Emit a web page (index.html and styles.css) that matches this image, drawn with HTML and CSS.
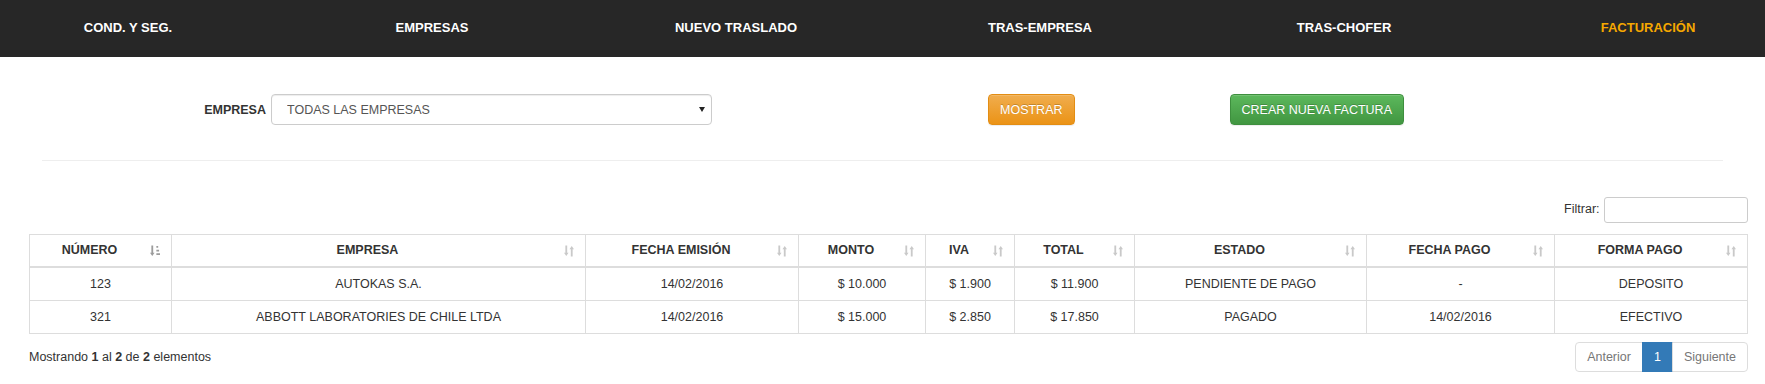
FILE: index.html
```html
<!DOCTYPE html>
<html lang="es">
<head>
<meta charset="UTF-8">
<title>Facturación</title>
<link rel="stylesheet" href="styles.css">
</head>
<body>
<div class="navbar">
  <ul class="nav">
    <li><a href="#">COND. Y SEG.</a></li>
    <li><a href="#">EMPRESAS</a></li>
    <li><a href="#">NUEVO TRASLADO</a></li>
    <li><a href="#">TRAS-EMPRESA</a></li>
    <li><a href="#">TRAS-CHOFER</a></li>
    <li class="active"><a href="#">FACTURACIÓN</a></li>
  </ul>
</div>

<div class="page">
  <form class="filtros">
    <label class="lbl-empresa" for="empresa">EMPRESA</label>
    <div class="select-wrap">
      <select id="empresa" class="form-control">
        <option>TODAS LAS EMPRESAS</option>
      </select>
      <span class="caret"></span>
    </div>
    <button type="button" class="btn btn-warning btn-mostrar">MOSTRAR</button>
    <button type="button" class="btn btn-success btn-crear">CREAR NUEVA FACTURA</button>
  </form>

  <hr>

  <div class="dt-filter">
    <label>Filtrar: <input type="search"></label>
  </div>

  <table class="dt">
    <colgroup>
      <col class="w-num"><col class="w-emp"><col class="w-fecha"><col class="w-monto"><col class="w-iva">
      <col class="w-total"><col class="w-estado"><col class="w-pago"><col class="w-forma">
    </colgroup>
    <thead>
      <tr>
        <th>NÚMERO<svg class="sort sort-asc" viewBox="0 0 11 12"><path d="M1.5 0h2v8H5l-2.5 3.5L0 8h1.5z M7 .5h2v2H7z M7 4.5h3v2H7z M7 8.5h4v2H7z"/></svg></th>
        <th>EMPRESA<svg class="sort" viewBox="0 0 11 12"><path d="M1.5 0h2v8H5l-2.5 3.5L0 8h1.5z M7.5 12h2V4H11L8.5.5 6 4h1.5z"/></svg></th>
        <th>FECHA EMISIÓN<svg class="sort" viewBox="0 0 11 12"><path d="M1.5 0h2v8H5l-2.5 3.5L0 8h1.5z M7.5 12h2V4H11L8.5.5 6 4h1.5z"/></svg></th>
        <th>MONTO<svg class="sort" viewBox="0 0 11 12"><path d="M1.5 0h2v8H5l-2.5 3.5L0 8h1.5z M7.5 12h2V4H11L8.5.5 6 4h1.5z"/></svg></th>
        <th>IVA<svg class="sort" viewBox="0 0 11 12"><path d="M1.5 0h2v8H5l-2.5 3.5L0 8h1.5z M7.5 12h2V4H11L8.5.5 6 4h1.5z"/></svg></th>
        <th>TOTAL<svg class="sort" viewBox="0 0 11 12"><path d="M1.5 0h2v8H5l-2.5 3.5L0 8h1.5z M7.5 12h2V4H11L8.5.5 6 4h1.5z"/></svg></th>
        <th>ESTADO<svg class="sort" viewBox="0 0 11 12"><path d="M1.5 0h2v8H5l-2.5 3.5L0 8h1.5z M7.5 12h2V4H11L8.5.5 6 4h1.5z"/></svg></th>
        <th>FECHA PAGO<svg class="sort" viewBox="0 0 11 12"><path d="M1.5 0h2v8H5l-2.5 3.5L0 8h1.5z M7.5 12h2V4H11L8.5.5 6 4h1.5z"/></svg></th>
        <th>FORMA PAGO<svg class="sort" viewBox="0 0 11 12"><path d="M1.5 0h2v8H5l-2.5 3.5L0 8h1.5z M7.5 12h2V4H11L8.5.5 6 4h1.5z"/></svg></th>
      </tr>
    </thead>
    <tbody>
      <tr>
        <td>123</td><td>AUTOKAS S.A.</td><td>14/02/2016</td><td>$ 10.000</td><td>$ 1.900</td>
        <td>$ 11.900</td><td>PENDIENTE DE PAGO</td><td>-</td><td>DEPOSITO</td>
      </tr>
      <tr>
        <td>321</td><td>ABBOTT LABORATORIES DE CHILE LTDA</td><td>14/02/2016</td><td>$ 15.000</td><td>$ 2.850</td>
        <td>$ 17.850</td><td>PAGADO</td><td>14/02/2016</td><td>EFECTIVO</td>
      </tr>
    </tbody>
  </table>

  <div class="dt-bottom">
    <div class="dt-info">Mostrando <b>1</b> al <b>2</b> de <b>2</b> elementos</div>
    <ul class="pagination">
      <li class="disabled"><a href="#">Anterior</a></li>
      <li class="active"><a href="#">1</a></li>
      <li class="disabled"><a href="#">Siguiente</a></li>
    </ul>
  </div>
</div>
</body>
</html>
```

FILE: styles.css
```css
*{box-sizing:border-box}
body{margin:0;background:#fff;font-family:"Liberation Sans",Arial,sans-serif;font-size:12.5px;line-height:18px;color:#333}

/* barra superior */
.navbar{background:#272727;height:57px}
.nav{display:grid;grid-template-columns:repeat(6,304px);margin:0 0 0 -24px;padding:0;list-style:none}
.nav li{text-align:center}
.nav a{display:inline-block;line-height:56px;font-size:13px;font-weight:bold;color:#fff;text-decoration:none}
.nav .active a{color:#f6a800}

.page{padding:0 17px 0 29px}

/* filtros */
.filtros{display:flex;align-items:center;margin:37px 0 0;padding-left:175px}
.lbl-empresa{flex:0 0 67px;padding-right:5px;text-align:right;font-weight:bold;white-space:nowrap}
.select-wrap{position:relative}
.form-control{display:block;width:441px;height:31px;padding:0 0 0 15px;border:1px solid #ccc;border-radius:4px;background:#fff;color:#555;font:inherit;box-shadow:inset 0 1px 1px rgba(0,0,0,.075);-webkit-appearance:none;appearance:none}
.caret{position:absolute;right:7px;top:13px;border-left:3.5px solid transparent;border-right:3.5px solid transparent;border-top:5px solid #222}

.btn{height:31px;padding:0 11px;border:1px solid;border-radius:4px;font:inherit;color:#fff;text-shadow:0 -1px 0 rgba(0,0,0,.2);box-shadow:inset 0 1px 0 rgba(255,255,255,.15),0 1px 1px rgba(0,0,0,.075)}
.btn-warning{background:linear-gradient(#f0ad4e,#eb9316);border-color:#e38d13}
.btn-success{background:linear-gradient(#5cb85c,#419641);border-color:#3e8f3e}
.btn-mostrar{margin-left:276px}
.btn-crear{margin-left:155px}

hr{margin:35px 25px 0 13px;border:0;border-top:1px solid #eee}

/* tabla */
.dt-filter{display:flex;justify-content:flex-end;margin-top:36px}
.dt-filter input{width:144px;height:26px;margin-left:1px;padding:0 6px;border:1px solid #ccc;border-radius:3px;vertical-align:middle;font:inherit}

.dt{width:100%;margin-top:11px;border-collapse:collapse;table-layout:fixed;border:1px solid #ddd}
.w-num{width:142px}
.w-emp{width:414px}
.w-fecha{width:213px}
.w-monto{width:127px}
.w-iva{width:89px}
.w-total{width:120px}
.w-estado{width:232px}
.w-pago{width:188px}
.w-forma{width:193px}
.dt th,.dt td{border:1px solid #ddd;text-align:center;white-space:nowrap}
.dt th{position:relative;padding:6px 30px 7px 8px;border-bottom-width:2px;font-weight:bold}
.dt td{padding:7px 8px}
.sort{position:absolute;right:11px;top:10px;width:10px;height:12px;fill:#c9c9c9}
.sort-asc{fill:#9c9c9c}

.dt-bottom{display:flex;justify-content:space-between;align-items:center;margin-top:8px}
.pagination{display:flex;margin:0;padding:0;list-style:none}
.pagination a{display:block;padding:5px 11px;margin-left:-1px;border:1px solid #ddd;color:#777;text-decoration:none;line-height:18px}
.pagination li:first-child a{margin-left:0;border-radius:4px 0 0 4px}
.pagination li:last-child a{border-radius:0 4px 4px 0}
.pagination .active a{background:#337ab7;border-color:#337ab7;color:#fff}
```
